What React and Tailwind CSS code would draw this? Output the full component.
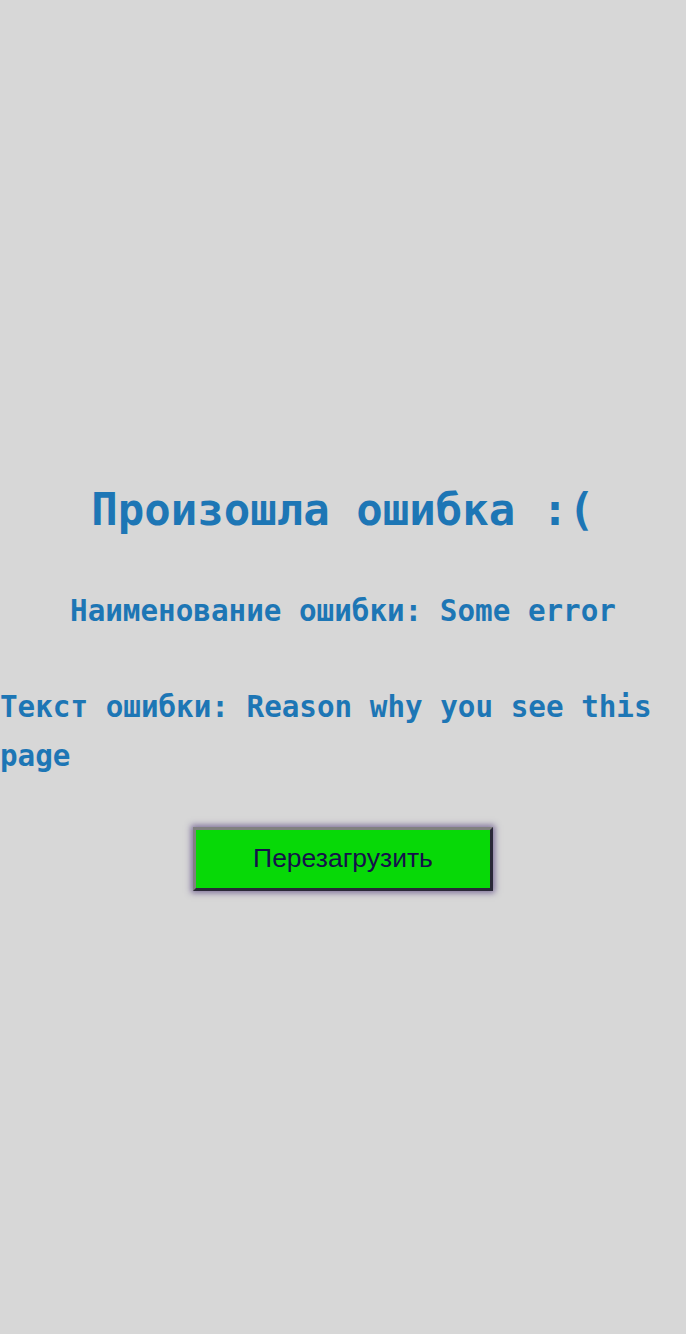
export default function App() {
  return (
    <div className="min-h-[1334px] w-full bg-[#d7d7d7] text-[#1d76b5] font-['DejaVu_Sans_Mono',monospace] font-bold">
      <div className="pt-[478px]">
        <h1 className="text-center text-[44px] leading-[64px]">Произошла ошибка :(</h1>
        <p className="mt-[45px] text-center text-[29.25px] leading-[48px]">Наименование ошибки: Some error</p>
        <p className="mt-[48px] text-[29.25px] leading-[49px]">Текст ошибки: Reason why you see this page</p>
        <div className="mt-[46px] flex justify-center">
          <button className="w-[300px] h-[64px] bg-[#07d907] border-[3px] border-t-[#808080] border-l-[#808080] border-b-[#2a2838] border-r-[#2a2838] shadow-[0_0_6px_2px_rgba(90,70,130,0.7)] text-[#15104a] font-['Liberation_Sans',Arial,sans-serif] font-normal text-[26.5px]">
            Перезагрузить
          </button>
        </div>
      </div>
    </div>
  );
}
